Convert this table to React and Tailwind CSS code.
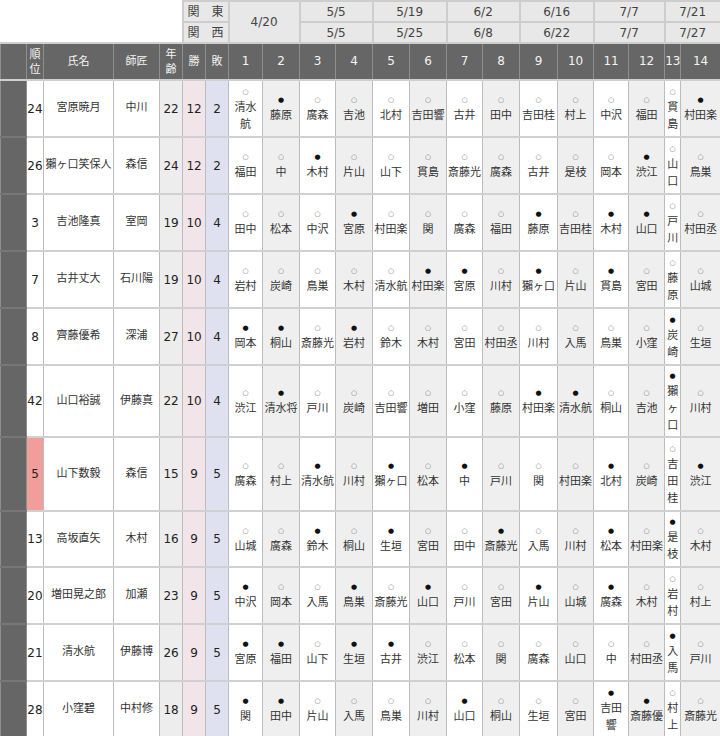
import React from 'react';

const widths = [
  'w-[26px]', 'w-[17px]', 'w-[70px]', 'w-[46px]', 'w-[23px]', 'w-[23px]', 'w-[23px]',
  'w-[34px]', 'w-[37px]', 'w-[36px]', 'w-[37px]', 'w-[37px]', 'w-[37px]', 'w-[36px]',
  'w-[37px]', 'w-[38px]', 'w-[36px]', 'w-[35px]', 'w-[36px]', 'w-[16px]', 'w-[40px]',
];

const dates = [
  ['4/20'],
  ['5/5', '5/5'],
  ['5/19', '5/25'],
  ['6/2', '6/8'],
  ['6/16', '6/22'],
  ['7/7', '7/7'],
  ['7/21', '7/27'],
];

// o = ○ (白星), x = ● (黒星), "/" = 改行
const rows = [
  { rank: '24', name: '宮原暁月', master: '中川', age: '22', win: '12', lose: '2', h: 'h-[57px]',
    g: 'o清水/航 x藤原 o廣森 o吉池 o北村 o吉田響 o古井 o田中 o吉田桂 o村上 o中沢 o福田 o貫/島 x村田楽' },
  { rank: '26', name: '獺ヶ口笑保人', master: '森信', age: '24', win: '12', lose: '2', h: 'h-[57px]',
    g: 'o福田 o中 x木村 o片山 o山下 o貫島 o斎藤光 o廣森 o古井 o是枝 o岡本 x渋江 o山/口 o鳥巣' },
  { rank: '3', name: '吉池隆真', master: '室岡', age: '19', win: '10', lose: '4', h: 'h-[57px]',
    g: 'o田中 o松本 o中沢 x宮原 o村田楽 o関 o廣森 o福田 x藤原 o吉田桂 x木村 x山口 o戸/川 o村田丞' },
  { rank: '7', name: '古井丈大', master: '石川陽', age: '19', win: '10', lose: '4', h: 'h-[57px]',
    g: 'o岩村 o炭崎 o鳥巣 o木村 o清水航 x村田楽 x宮原 o川村 x獺ヶ口 o片山 x貫島 o宮田 o藤/原 o山城' },
  { rank: '8', name: '齊藤優希', master: '深浦', age: '27', win: '10', lose: '4', h: 'h-[57px]',
    g: 'x岡本 x桐山 o斎藤光 x岩村 o鈴木 o木村 o宮田 o村田丞 o川村 o入馬 o鳥巣 o小窪 x炭/崎 o生垣' },
  { rank: '42', name: '山口裕誠', master: '伊藤真', age: '22', win: '10', lose: '4', h: 'h-[72px]',
    g: 'o渋江 x清水将 o戸川 o炭崎 o吉田響 o増田 o小窪 o藤原 x村田楽 x清水航 o桐山 o吉池 x獺/ヶ/口 o川村' },
  { rank: '5', red: true, name: '山下数毅', master: '森信', age: '15', win: '9', lose: '5', h: 'h-[74px]',
    g: 'o廣森 o村上 x清水航 o川村 x獺ヶ口 o松本 x中 o戸川 o関 o村田楽 x北村 o炭崎 o吉/田/桂 x渋江' },
  { rank: '13', name: '高坂直矢', master: '木村', age: '16', win: '9', lose: '5', h: 'h-[56px]',
    g: 'o山城 o廣森 x鈴木 o桐山 x生垣 o宮田 o田中 x斎藤光 o入馬 o川村 x松本 o村田楽 x是/枝 o木村' },
  { rank: '20', name: '増田晃之郎', master: '加瀬', age: '23', win: '9', lose: '5', h: 'h-[57px]',
    g: 'x中沢 o岡本 o入馬 x鳥巣 o斎藤光 x山口 o戸川 o宮田 x片山 o山城 x廣森 o木村 o岩/村 o村上' },
  { rank: '21', name: '清水航', master: '伊藤博', age: '26', win: '9', lose: '5', h: 'h-[57px]',
    g: 'x宮原 x福田 o山下 x生垣 x古井 o渋江 o松本 o関 o廣森 o山口 o中 o村田丞 x入/馬 o戸川' },
  { rank: '28', name: '小窪碧', master: '中村修', age: '18', win: '9', lose: '5', h: 'h-[57px]',
    g: 'x関 x田中 o片山 o入馬 o鳥巣 o川村 x山口 o桐山 o生垣 o宮田 x吉田/響 x斎藤優 o村/上 o斎藤光' },
];

const cell = 'border-x border-y-2 border-x-[#bcbcbc] border-y-[#d0d0d0] p-0 text-center align-middle';
const head = 'border-x border-y-2 border-x-[#8e8e8e] border-y-[#cfcfcf] p-0 text-center align-middle bg-[#666] text-[#f4f4f4] text-[11px] leading-[15px]';
const dateCell = 'border-2 border-[#cdcdcd] p-0 text-center align-middle bg-[#e8e8e8] text-[#444] text-[12px]';

function Game({ v, idx }) {
  const black = v[0] === 'x';
  const lines = v.slice(1).split('/');
  return (
    <td className={`${cell} ${idx % 2 ? 'bg-[#efefef]' : 'bg-white'}`}>
      <div className={`text-[7px] leading-[14px] ${black ? 'text-[#111]' : 'text-[#777]'}`}>
        {black ? '●' : '○'}
      </div>
      {lines.map((l, i) => (
        <div key={i} className="text-[11px] leading-[17px] whitespace-nowrap text-[#333]">
          {l}
        </div>
      ))}
    </td>
  );
}

export default function App() {
  return (
    <div className="w-[720px] h-[736px] overflow-hidden bg-white font-['DejaVu_Sans','Noto_Sans_CJK_JP',sans-serif]">
      <table className="table-fixed border-collapse w-[720px]">
        <colgroup>
          {widths.map((w, i) => (
            <col key={i} className={w} />
          ))}
        </colgroup>
        <tbody>
          <tr className="h-[21px]">
            <td colSpan={5} rowSpan={2} className="p-0 bg-white" />
            <td colSpan={2} className={`${dateCell} text-[11px]`}>関　東</td>
            {dates.map((d, i) => (
              <td key={i} colSpan={2} rowSpan={d.length === 1 ? 2 : 1} className={dateCell}>
                {d[0]}
              </td>
            ))}
          </tr>
          <tr className="h-[21px]">
            <td colSpan={2} className={`${dateCell} text-[11px]`}>関　西</td>
            {dates.filter((d) => d.length > 1).map((d, i) => (
              <td key={i} colSpan={2} className={dateCell}>
                {d[1]}
              </td>
            ))}
          </tr>
          <tr className="h-[37px]">
            <td className={head} />
            <td className={head}>順<br />位</td>
            <td className={head}>氏名</td>
            <td className={head}>師匠</td>
            <td className={head}>年<br />齢</td>
            <td className={head}>勝</td>
            <td className={head}>敗</td>
            {Array.from({ length: 14 }, (_, i) => (
              <td key={i} className={`${head} text-[12px]`}>{i + 1}</td>
            ))}
          </tr>
          {rows.map((r) => (
            <tr key={r.rank} className={r.h}>
              <td className="border-x border-y-2 border-x-[#8e8e8e] border-y-[#777] bg-[#666] p-0" />
              <td className={`${cell} text-[12px] text-[#222] ${r.red ? 'bg-[#f09d9b]' : 'bg-white'}`}>{r.rank}</td>
              <td className={`${cell} bg-white text-[11px] text-[#333] whitespace-nowrap`}>{r.name}</td>
              <td className={`${cell} bg-white text-[11px] text-[#333]`}>{r.master}</td>
              <td className={`${cell} bg-[#ededed] text-[12px] text-[#222]`}>{r.age}</td>
              <td className={`${cell} bg-[#f2e5ea] text-[12px] text-[#222]`}>{r.win}</td>
              <td className={`${cell} bg-[#dfe1f1] text-[12px] text-[#222]`}>{r.lose}</td>
              {r.g.split(' ').map((v, i) => (
                <Game key={i} v={v} idx={i} />
              ))}
            </tr>
          ))}
        </tbody>
      </table>
    </div>
  );
}
